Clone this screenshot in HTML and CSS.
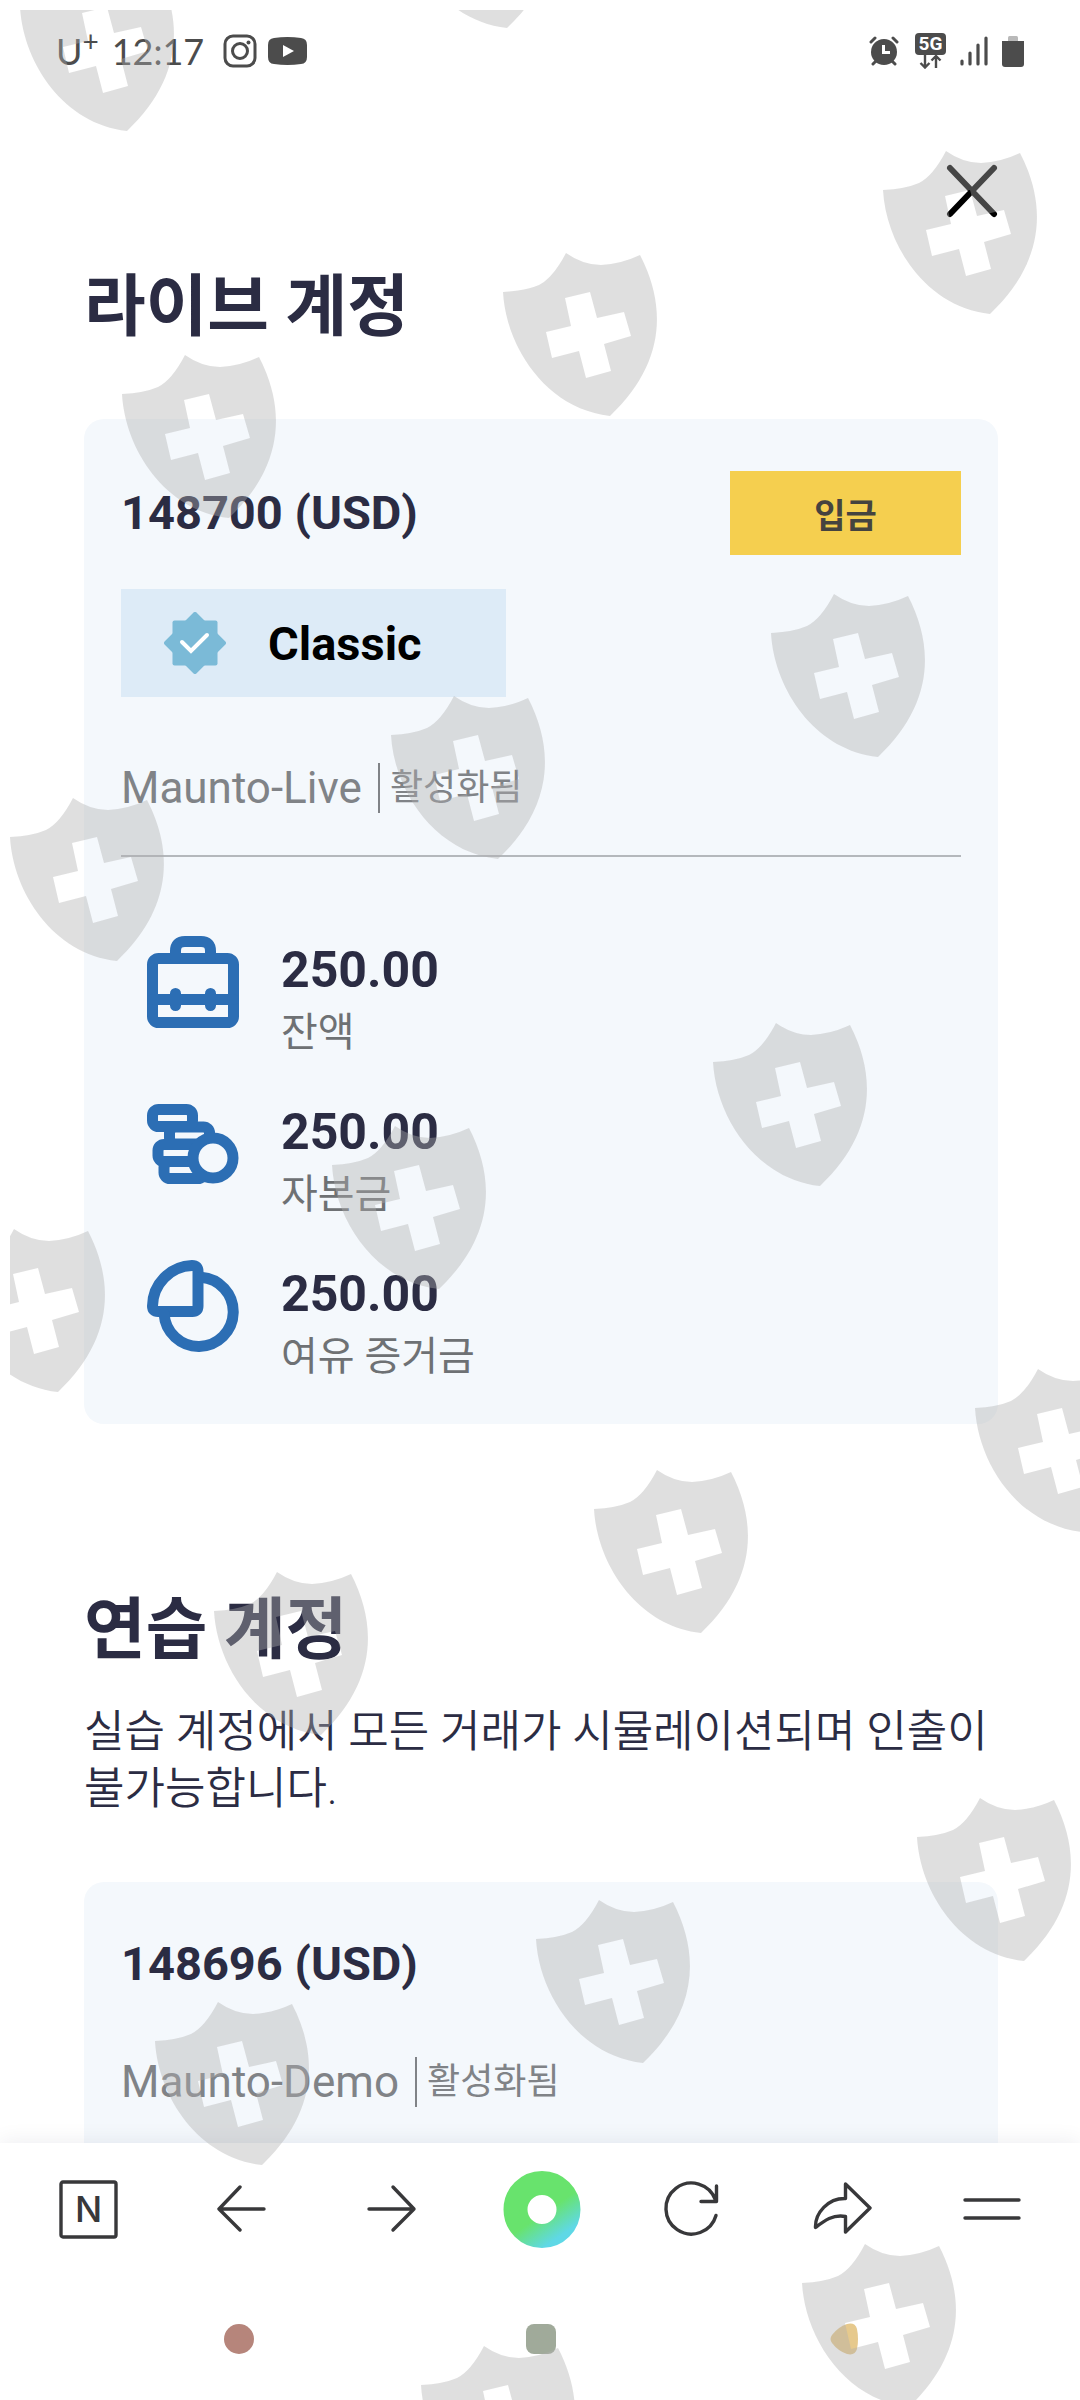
FILE: index.html
```html
<!DOCTYPE html>
<html lang="ko">
<head>
<meta charset="utf-8">
<meta name="viewport" content="width=device-width, initial-scale=1">
<title>계정</title>
<link rel="stylesheet" href="styles.css">
</head>
<body>
<header class="status">
  <div class="status-group">
    <span class="carrier">U<sup class="plus">+</sup></span>
    <time class="clock">12:17</time>
    <svg class="icon-insta" width="34" height="34" viewBox="0 0 34 34" fill="none" stroke="#4c4c4c" stroke-width="3" aria-hidden="true"><rect x="2" y="2" width="30" height="30" rx="8"/><circle cx="17" cy="17" r="7.5"/><circle cx="25.500" cy="8.500" r="2" fill="#4c4c4c" stroke="none"/></svg>
    <svg width="39" height="28" viewBox="0 0 39 28" aria-hidden="true"><path fill="#4c4c4c" d="M6 1Q19.500-1 33 1Q39 1.500 39 8V20Q39 26.500 33 27Q19.500 29 6 27Q0 26.500 0 20V8Q0 1.500 6 1Z"/><path fill="#fff" d="M15 8L26 14L15 20Z"/></svg>
  </div>
  <div class="status-group status-right">
    <svg width="30" height="30" viewBox="0 0 30 30" aria-hidden="true"><circle cx="15" cy="16" r="13" fill="#4c4c4c"/><path d="M2 6L6 2M28 6L24 2M4 28L7 25M26 28L23 25" stroke="#4c4c4c" stroke-width="3" stroke-linecap="round"/><path d="M14.500 9V16.500H21" fill="none" stroke="#fff" stroke-width="3"/></svg>
    <div class="net">
      <span class="net-label">5G</span>
      <svg width="31" height="14" viewBox="0 0 31 14" fill="none" stroke="#4c4c4c" stroke-width="2.400" aria-hidden="true"><path d="M10 0V12M5.500 8L10 12.500L14.500 8M21 13V1M16.500 5.500L21 1L25.500 5.500"/></svg>
    </div>
    <svg width="28" height="30" viewBox="0 0 28 30" stroke="#4c4c4c" stroke-width="3.200" stroke-linecap="round" aria-hidden="true"><path d="M2 25V28M10 17V28M18 9V28M26 2V28"/></svg>
    <svg width="22" height="31" viewBox="0 0 22 31" aria-hidden="true"><path fill="#b9b9b9" d="M6 5V1.500Q6 0 7.500 0H14.500Q16 0 16 1.500V5Z"/><path fill="#4c4c4c" d="M0 5H22V28Q22 31 19 31H3Q0 31 0 28Z"/></svg>
  </div>
</header>

<main class="page">
  <div class="close-row">
    <button class="close" type="button" aria-label="닫기"><svg width="52" height="54" viewBox="0 0 52 54" stroke="#000" stroke-width="6" stroke-linecap="round"><path d="M4 4L48 50M48 4L4 50"/></svg></button>
  </div>

  <section>
    <h1 class="title">라이브 계정</h1>
    <article class="card">
      <div class="card-head">
        <h2 class="account">148700 (USD)</h2>
        <button class="deposit" type="button">입금</button>
      </div>
      <div class="tier">
        <svg width="62" height="62" viewBox="0 0 62 62" aria-hidden="true"><g fill="#7bbad7"><rect x="8.500" y="8.500" width="45" height="45" rx="2"/><rect x="8.500" y="8.500" width="45" height="45" rx="2" transform="rotate(45 31 31)"/></g><path d="M18 30L27 39L43 23" fill="none" stroke="#fff" stroke-width="4" stroke-linecap="round"/></svg>
        <span>Classic</span>
      </div>
      <p class="meta"><span class="server">Maunto-Live</span><span class="state">활성화됨</span></p>
      <hr class="rule">
      <dl class="stats">
        <div class="stat">
          <svg class="stat-icon" viewBox="0 0 92 92" aria-hidden="true"><rect x="5.500" y="22.500" width="81" height="64" rx="6"/><path d="M28.500 22V15Q28.500 5.500 38 5.500H54Q63.500 5.500 63.500 15V22M6 63.500H86"/><path d="M28.500 57.500V69.500M63.500 57.500V69.500"/></svg>
          <dd class="value">250.00</dd><dt class="label">잔액</dt>
        </div>
        <div class="stat">
          <svg class="stat-icon" viewBox="0 0 92 92" aria-hidden="true"><rect x="22.500" y="29" width="40" height="17" rx="6"/><rect x="5.500" y="11.500" width="40" height="17" rx="6"/><rect x="11" y="46.500" width="40" height="17" rx="6"/><rect x="17" y="63.500" width="40" height="17" rx="6"/><circle class="coin" cx="66" cy="60" r="20"/></svg>
          <dd class="value">250.00</dd><dt class="label">자본금</dt>
        </div>
        <div class="stat">
          <svg class="stat-icon" viewBox="0 0 92 92" aria-hidden="true"><path d="M51 11.500V46Q51 51.500 45.500 51.500H11Q5.500 51.500 5.500 46A41 41 0 0 1 45 5.500Q51 5.500 51 11.500Z"/><path d="M54 17.300A34.600 34.600 0 1 1 17.100 54"/></svg>
          <dd class="value">250.00</dd><dt class="label">여유 증거금</dt>
        </div>
      </dl>
    </article>
  </section>

  <section class="practice">
    <h1 class="title">연습 계정</h1>
    <p class="intro">실습 계정에서 모든 거래가 시뮬레이션되며 인출이 불가능합니다.</p>
    <article class="card">
      <h2 class="account">148696 (USD)</h2>
      <p class="meta"><span class="server">Maunto-Demo</span><span class="state">활성화됨</span></p>
    </article>
  </section>
</main>

<footer class="chrome">
  <nav class="toolbar" aria-label="브라우저">
    <button type="button" aria-label="홈"><svg class="tool" viewBox="0 0 64 64"><rect x="3" y="4" width="55" height="55" rx="2"/><text class="n" x="30.500" y="44" text-anchor="middle">N</text></svg></button>
    <button type="button" aria-label="뒤로"><svg class="tool" viewBox="0 0 64 64"><path d="M56 31H11M32 9L11 31L32 52"/></svg></button>
    <button type="button" aria-label="앞으로"><svg class="tool" viewBox="0 0 64 64"><path d="M11 31H56M35 9L56 31L35 52"/></svg></button>
    <button type="button" aria-label="그린닷"><svg width="82" height="78" viewBox="0 0 82 78"><defs><linearGradient id="dot" x1=".3" y1=".2" x2=".85" y2="1"><stop offset=".45" stop-color="#68e36d"/><stop offset="1" stop-color="#5fd8e6"/></linearGradient></defs><circle cx="43" cy="38.500" r="26.500" fill="none" stroke="url(#dot)" stroke-width="24"/></svg></button>
    <button type="button" aria-label="새로고침"><svg class="tool" viewBox="0 0 64 64"><path d="M58 37.500A25.500 25.500 0 1 1 57.500 22M58.500 8V23.500H43"/></svg></button>
    <button type="button" aria-label="공유"><svg class="tool" viewBox="0 0 64 64"><path d="M37.500 6L62 30L37.500 54V38.500C25 36 16 43 7.500 49.500C7 35 20 20 37.500 20.500Z"/></svg></button>
    <button type="button" aria-label="메뉴"><svg class="tool" viewBox="0 0 64 64"><path d="M7 22H61M7 40H61"/></svg></button>
  </nav>
  <nav class="system" aria-label="시스템">
    <button type="button" aria-label="최근 앱"><svg width="30" height="30" viewBox="0 0 30 30"><circle cx="15" cy="15" r="15" fill="#b6857b"/></svg></button>
    <button type="button" aria-label="홈 화면"><svg width="30" height="30" viewBox="0 0 30 30"><rect width="30" height="30" rx="8" fill="#a0aa9a"/></svg></button>
    <button type="button" aria-label="이전"><svg width="30" height="32" viewBox="0 0 30 32"><path fill="#e6c98d" d="M19 1Q27-1 29 6Q31 16 29 26Q27 33 19 31Q10 28 4 20Q1 16 4 12Q10 4 19 1Z"/></svg></button>
  </nav>
</footer>

<svg class="shields" aria-hidden="true">
  <defs><path id="shield" fill-rule="evenodd" d="M0 40Q22 39 36 33Q50 26 63 1Q80 13 98 13Q118 12 137 3C164 55 162 112 107 164C43 157 3 95 0 40ZM62 46L87 40L94 66L121 60L128 84L101 92L108 119L83 126L76 99L49 106L43 80L68 74Z"/></defs>
  <use href="#shield" x="10" y="-43"/><use href="#shield" x="390" y="-146"/>
  <use href="#shield" x="873" y="140"/><use href="#shield" x="493" y="242"/><use href="#shield" x="112" y="344"/>
  <use href="#shield" x="761" y="583"/><use href="#shield" x="381" y="685"/><use href="#shield" x="0" y="787"/>
  <use href="#shield" x="703" y="1012"/><use href="#shield" x="322" y="1115"/><use href="#shield" x="-59" y="1218"/>
  <use href="#shield" x="965" y="1358"/><use href="#shield" x="584" y="1459"/><use href="#shield" x="204" y="1561"/>
  <use href="#shield" x="907" y="1787"/><use href="#shield" x="526" y="1889"/><use href="#shield" x="145" y="1991"/>
  <use href="#shield" x="792" y="2233"/><use href="#shield" x="411" y="2335"/>
</svg>
</body>
</html>
```
FILE: styles.css
```css
* { box-sizing: border-box; }

body {
  margin: 0;
  height: 100vh;
  display: flex;
  flex-direction: column;
  background: #fff;
  color: #2b2c43;
  font-family: Roboto, "Noto Sans CJK KR", sans-serif;
}

h1, h2, p, dl, dd { margin: 0; }

button {
  padding: 0;
  border: 0;
  background: none;
  font: inherit;
  color: inherit;
}

svg { display: block; }

/* Status bar */
.status {
  flex: none;
  height: 102px;
  padding: 0 56px;
  display: flex;
  align-items: center;
  justify-content: space-between;
  color: #4c4c4c;
}
.status-group { display: flex; align-items: center; gap: 11px; }
.status-right { gap: 14px; }
.carrier, .clock {
  font-family: Lato, sans-serif;
  font-size: 36px;
  line-height: 40px;
}
.carrier { display: flex; align-items: flex-start; margin-right: 2px; }
.plus { font-size: 28px; line-height: 20px; }
.icon-insta { margin-left: 8px; }
.net { margin-left: 2px; }
.net-label {
  display: block;
  width: 31px;
  border-radius: 4px;
  background: #4c4c4c;
  color: #fff;
  font-size: 19px;
  line-height: 22px;
  font-weight: 700;
  text-align: center;
}

/* Scrolling page */
.page {
  flex: 1;
  min-height: 0;
  overflow-y: auto;
  scrollbar-width: none;
  padding: 62px 82px 0 84px;
}
.close-row { display: flex; justify-content: flex-end; margin-bottom: 49px; }
.title {
  font-size: 67px;
  line-height: 80px;
  font-weight: 700;
}
.practice { margin-top: 166px; }
.intro {
  margin-top: 34px;
  font-size: 44px;
  line-height: 57px;
  font-weight: 350;
  word-break: keep-all;
}

/* Account cards */
.card {
  margin-top: 72px;
  padding: 52px 37px 38px;
  border-radius: 20px;
  background: #f4f8fc;
}
.practice .card { margin-top: 64px; padding-bottom: 80px; }
.card-head { display: flex; align-items: center; justify-content: space-between; }
.account { font-size: 47px; line-height: 60px; font-weight: 700; }
.deposit {
  width: 231px;
  height: 84px;
  background: #f5cf4f;
  color: #45433f;
  font-size: 34px;
  font-weight: 700;
}
.tier {
  width: fit-content;
  height: 108px;
  margin-top: 34px;
  padding: 0 84px 0 43px;
  display: flex;
  align-items: center;
  gap: 42px;
  background: #ddebf7;
  color: #000;
  font-size: 47px;
  font-weight: 700;
}
.meta {
  margin-top: 66px;
  display: flex;
  align-items: center;
  line-height: 50px;
  color: #808387;
}
.server { font-size: 44px; padding-right: 16px; border-right: 2px solid #808387; }
.state { font-size: 36px; padding-left: 10px; }
.practice .meta { margin-top: 63px; }
.rule { margin: 42px 0 79px; border: 0; height: 2px; background: #b4b8bc; }

.stats { display: grid; gap: 36px; padding-left: 26px; }
.stat {
  display: grid;
  grid-template-columns: 92px 1fr;
  grid-template-rows: 68px 58px;
  column-gap: 42px;
}
.stat-icon {
  grid-row: 1 / 3;
  width: 92px;
  height: 92px;
  fill: none;
  stroke: #2c6eb4;
  stroke-width: 11px;
  stroke-linecap: round;
}
.coin { fill: #f4f8fc; }
.value { font-size: 50px; line-height: 68px; font-weight: 700; }
.label { font-size: 40px; line-height: 58px; color: #6e7174; }

/* Browser toolbar and system keys */
.chrome {
  flex: none;
  position: relative;
  background: #fff;
  box-shadow: 0 -2px 20px rgba(0, 0, 50, .07);
}
.toolbar {
  height: 133px;
  padding: 0 15px;
  display: grid;
  grid-template-columns: repeat(7, 1fr);
}
.toolbar button, .system button { display: grid; place-items: center; }
.tool {
  width: 64px;
  height: 64px;
  fill: none;
  stroke: #38383a;
  stroke-width: 3.4px;
  stroke-linecap: round;
  stroke-linejoin: round;
}
.n { font: 500 36px Inter, sans-serif; fill: #38383a; stroke: none; }
.system {
  height: 124px;
  padding: 2px 86px 0 88px;
  display: grid;
  grid-template-columns: repeat(3, 1fr);
}

/* Shield overlay across the whole window */
.shields {
  position: fixed;
  top: 10px;
  left: 10px;
  width: calc(100% - 10px);
  height: calc(100% - 10px);
  overflow: hidden;
  pointer-events: none;
  fill: #b0b0b0;
  fill-opacity: .4;
}
```
